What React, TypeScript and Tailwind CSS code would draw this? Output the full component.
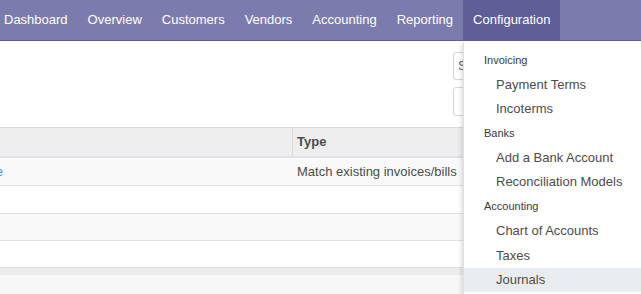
import React from "react";

const navItems = ["Dashboard", "Overview", "Customers", "Vendors", "Accounting", "Reporting", "Configuration"];

type MenuRow = { label: string; header?: boolean; active?: boolean };
const menu: MenuRow[] = [
  { label: "Invoicing", header: true },
  { label: "Payment Terms" },
  { label: "Incoterms" },
  { label: "Banks", header: true },
  { label: "Add a Bank Account" },
  { label: "Reconciliation Models" },
  { label: "Accounting", header: true },
  { label: "Chart of Accounts" },
  { label: "Taxes" },
  { label: "Journals", active: true },
];

export default function App() {
  return (
    <div
      className="relative w-[641px] h-[294px] overflow-hidden bg-white text-[13px] text-[#4c4c4c]"
      style={{ fontFamily: '"Liberation Sans", Arial, sans-serif' }}
    >
      {/* Navbar */}
      <nav className="flex h-[41px] bg-[#7c7bad] border-b border-[#5f5e97] pl-0">
        <div className="flex h-full -ml-[6px]">
          {navItems.map((n) => (
            <div
              key={n}
              className={`flex h-full items-center px-[10px] text-white text-[13px] ${
                n === "Configuration" ? "bg-[#5f5e97]" : ""
              }`}
            >
              {n}
            </div>
          ))}
        </div>
      </nav>

      {/* Control panel */}
      <div className="flex h-[86px] bg-white">
        <div className="flex-1" />
        <div className="w-[188px] flex flex-col gap-[7px] pt-[11px]">
          <div className="h-[28px] w-[180px] rounded-[3px] border border-[#d4d4d4] flex items-center pl-[4px] text-[#666]">
            Search...
          </div>
          <div className="h-[29px] w-[180px] rounded-[3px] border border-[#d4d4d4]" />
        </div>
      </div>

      {/* Table */}
      <div className="w-full">
        <div className="flex h-[31px] bg-[#eeeeee] border-t border-[#d8d8d8] border-b-2 border-b-[#dee2e6]">
          <div className="w-[293px] border-r border-[#dcdcdc]" />
          <div className="flex items-center pl-[4px] font-bold text-[#4c4c4c]">Type</div>
        </div>
        <div className="flex h-[28px] bg-[#f9f9f9] border-b border-[#dee2e6]">
          <div className="w-[293px] flex items-center">
            <div className="w-[3px] overflow-hidden flex justify-end">
              <span className="text-[#3d9be0]">e</span>
            </div>
          </div>
          <div className="flex items-center pl-[4px]">Match existing invoices/bills</div>
        </div>
        <div className="h-[28px] bg-white border-b border-[#dee2e6]" />
        <div className="h-[27px] bg-[#f9f9f9] border-b border-[#dee2e6]" />
        <div className="h-[27px] bg-white border-b border-[#dee2e6]" />
        <div className="h-[7px] bg-[#ececec]" />
        <div className="h-[30px] bg-[#f7f7f7]" />
      </div>

      {/* Dropdown */}
      <div className="absolute left-[463px] top-[42px] w-[190px] bg-white border-l border-[#e0e0e0] shadow-[-2px_2px_4px_rgba(0,0,0,0.12)] pt-[6px] pb-[8px]">
        {menu.map((m) => (
          <div
            key={m.label}
            className={`flex items-center h-[24.4px] ${
              m.header ? "pl-[20px] text-[11px] text-[#3a3a3a]" : "pl-[32px] text-[13px] text-[#4c4c4c]"
            } ${m.active ? "bg-[#e9ecef]" : ""}`}
          >
            {m.label}
          </div>
        ))}
      </div>
    </div>
  );
}
